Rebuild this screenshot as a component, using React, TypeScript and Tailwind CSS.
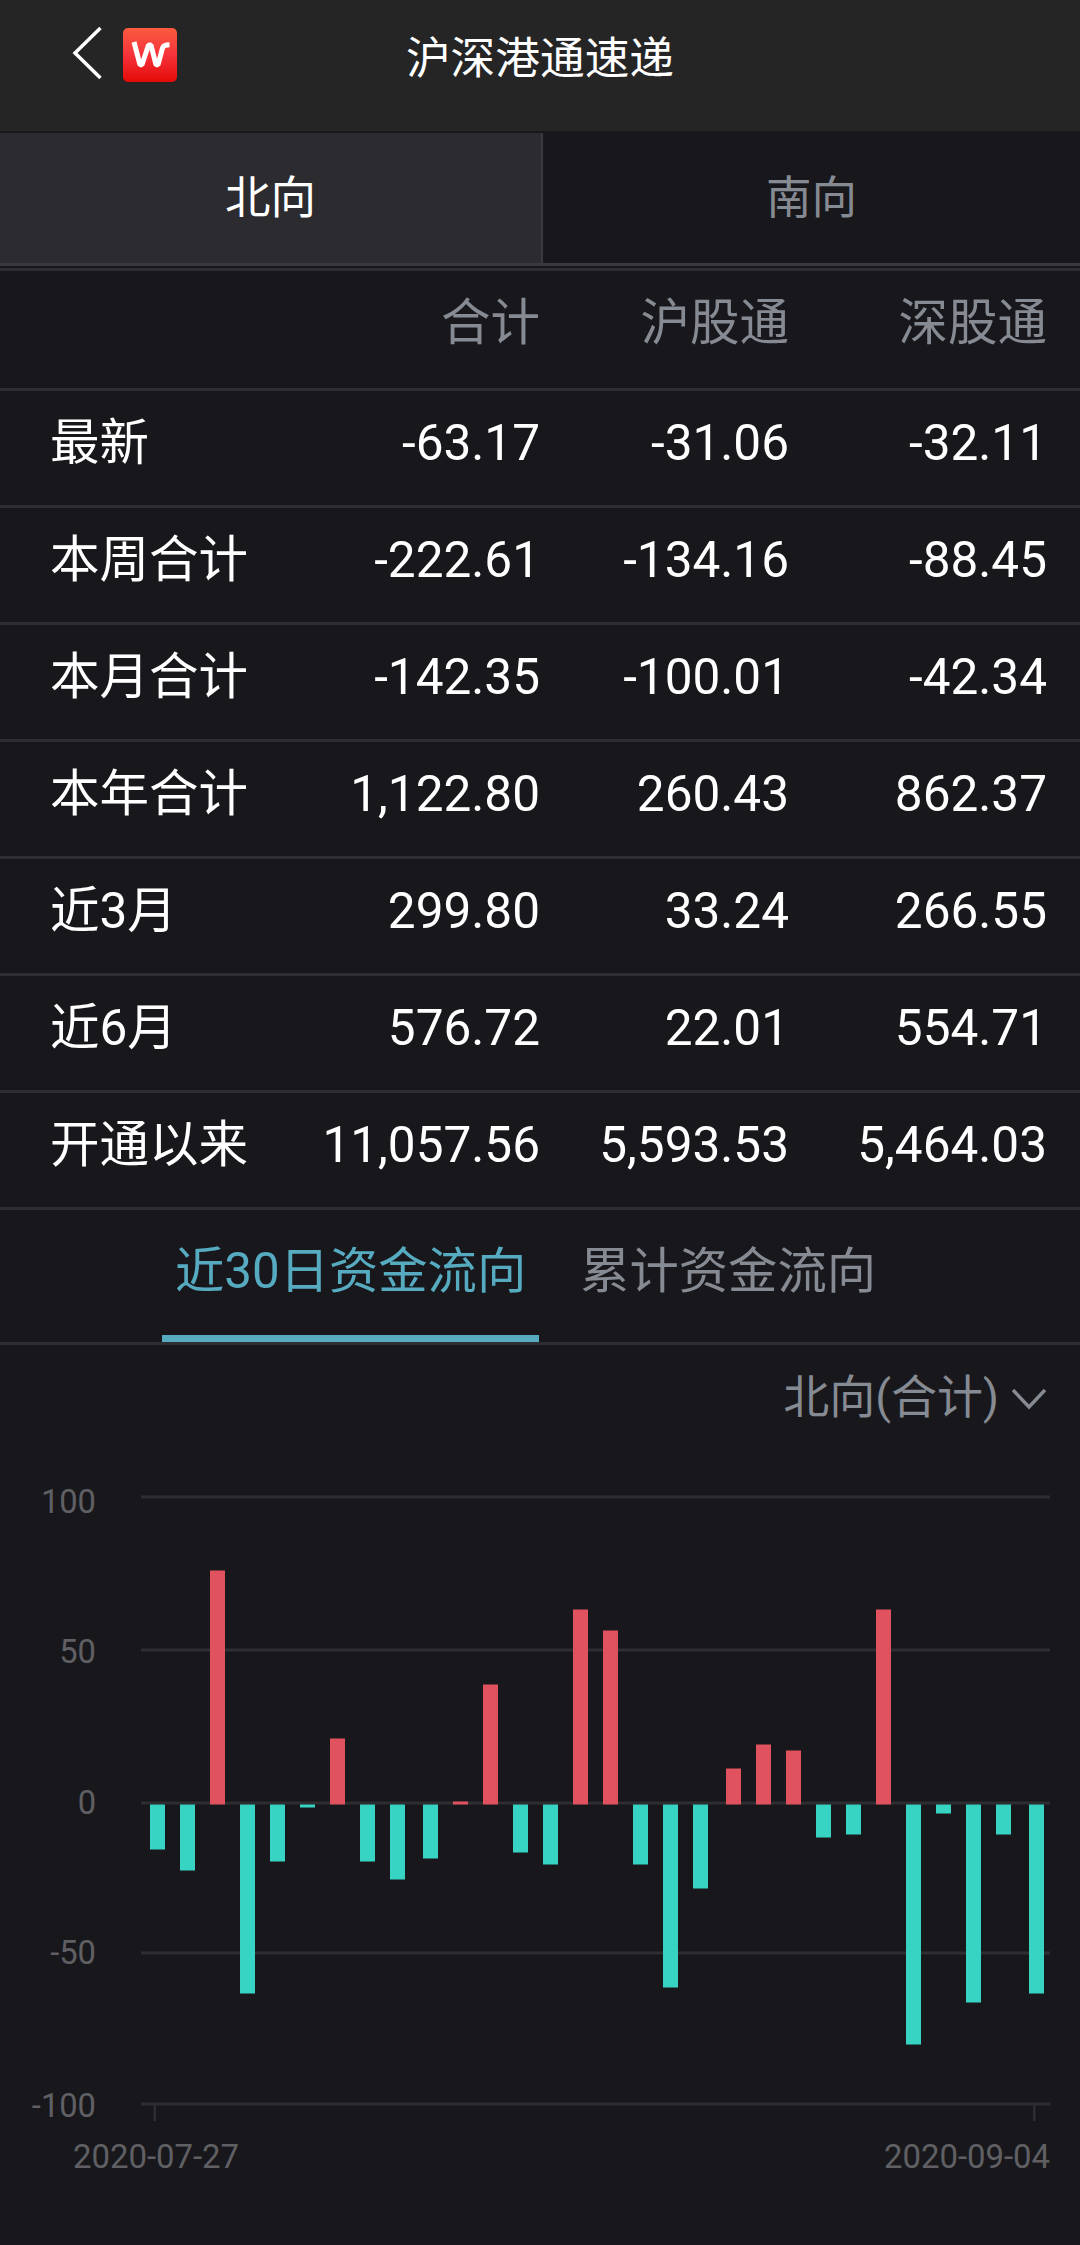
import { useState } from 'react';

const columns = ['合计', '沪股通', '深股通'];

const rows = [
    { label: '最新', values: ['-63.17', '-31.06', '-32.11'] },
    { label: '本周合计', values: ['-222.61', '-134.16', '-88.45'] },
    { label: '本月合计', values: ['-142.35', '-100.01', '-42.34'] },
    { label: '本年合计', values: ['1,122.80', '260.43', '862.37'] },
    { label: '近3月', values: ['299.80', '33.24', '266.55'] },
    { label: '近6月', values: ['576.72', '22.01', '554.71'] },
    { label: '开通以来', values: ['11,057.56', '5,593.53', '5,464.03'] },
];

// x offset and signed height of each daily bar, in chart pixels
const bars = [
    [150, -45], [180, -66], [210, 234], [240, -189], [270, -57], [300, -3],
    [330, 66], [360, -57], [390, -75], [423, -54], [453, 3], [483, 120],
    [513, -48], [543, -60], [573, 195], [603, 174], [633, -60], [663, -183],
    [693, -84], [726, 36], [756, 60], [786, 54], [816, -33], [846, -30],
    [876, 195], [906, -240], [936, -9], [966, -198], [996, -30], [1029, -189],
];

const gridLines = [
    { label: '100', y: 71, textY: 88 },
    { label: '50', y: 224, textY: 238 },
    { label: '0', y: 377, textY: 389 },
    { label: '-50', y: 527, textY: 539 },
    { label: '-100', y: 678, textY: 692 },
];

const ZERO = 379.5;

function FlowChart() {
    return (
        <svg width="1080" height="820" viewBox="0 0 1080 820" className="block">
            {gridLines.map((line) => (
                <g key={line.label}>
                    <rect x="141" y={line.y - 0.5} width="909" height="3" fill="#2d2d32" />
                    <text x="96" y={line.textY} textAnchor="end" fontSize="32.7" fill="#606064">{line.label}</text>
                </g>
            ))}
            <rect x="153.5" y="680" width="2.5" height="16" fill="#2d2d32" />
            <rect x="1033" y="680" width="2.5" height="16" fill="#2d2d32" />
            {bars.map(([x, h]) => (
                <rect
                    key={x}
                    x={x}
                    y={h > 0 ? ZERO - h : ZERO}
                    width="15"
                    height={Math.abs(h)}
                    fill={h > 0 ? '#e0525e' : '#37d3c3'}
                />
            ))}
            <text x="73" y="743" fontSize="32.9" fill="#606064">2020-07-27</text>
            <text x="1050" y="743" textAnchor="end" fontSize="32.9" fill="#606064">2020-09-04</text>
        </svg>
    );
}

function Logo() {
    return (
        <svg width="54" height="54" viewBox="0 0 54 54" fill="none">
            <defs>
                <linearGradient id="logo" x1="0" y1="0" x2="0" y2="1">
                    <stop offset="0" stopColor="#fb5a40" />
                    <stop offset="0.5" stopColor="#f5333a" />
                    <stop offset="1" stopColor="#e40a08" />
                </linearGradient>
            </defs>
            <rect width="54" height="54" rx="5" fill="url(#logo)" />
            <path d="M11 14L17 36.8H19L25.5 17H28L33 36.8H35L39.5 20Q40.5 16.7 46.5 16.7" stroke="#fff" strokeWidth="5" strokeLinejoin="bevel" />
        </svg>
    );
}

export default function App() {
    const [direction, setDirection] = useState('北向');
    const [flow, setFlow] = useState('近30日资金流向');

    return (
        <div className="w-[1080px] h-[2245px] overflow-hidden bg-[#18181c] text-white font-[Roboto,'Noto_Sans_CJK_SC',sans-serif]">
            <header className="grid grid-cols-[1fr_auto_1fr] h-[131px] pb-[21px] items-center bg-[#252525]">
                <div className="flex items-center pl-[72px]">
                    <svg width="30" height="54" viewBox="0 0 30 54" fill="none" className="-mt-1">
                        <path d="M28.5 2L3 27L28.5 52" stroke="#fff" strokeWidth="3.5" />
                    </svg>
                    <div className="ml-[21px]">
                        <Logo />
                    </div>
                </div>
                <h1 className="pt-[7px] text-[44.7px] leading-[60px]">沪深港通速递</h1>
            </header>

            <div className="flex h-[133px] mt-[2px] border-b-3 border-[#39393e]">
                {['北向', '南向'].map((name) => (
                    <button
                        key={name}
                        onClick={() => setDirection(name)}
                        className={`pt-[3px] text-[45.5px] ${name === '北向' ? 'w-[543px]' : 'w-[537px]'} ${direction === name ? 'bg-[#2c2b30] text-white border-r-2 border-[#39393e]' : 'text-[#868a92]'}`}
                    >
                        {name}
                    </button>
                ))}
            </div>

            <div className="mt-[2px] border-t-3 border-[#2d2d32] text-[49.5px]">
                <div className="grid grid-cols-[280px_260px_249px_258px] h-[120px] pb-[12px] items-center border-b-3 border-[#2d2d32] text-[#868a92] text-right">
                    <span />
                    {columns.map((name) => (
                        <span key={name}>{name}</span>
                    ))}
                </div>
                {rows.map((row) => (
                    <div
                        key={row.label}
                        className="grid grid-cols-[280px_260px_249px_258px] h-[117px] pb-[10px] items-center border-b-3 border-[#2d2d32] text-right"
                    >
                        <span className="pl-[50px] text-left whitespace-nowrap">{row.label}</span>
                        {row.values.map((value) => (
                            <span key={value}>{value}</span>
                        ))}
                    </div>
                ))}
            </div>

            <div className="flex gap-7 h-[135px] pl-[162px] border-b-3 border-[#2d2d32] text-[49.3px]">
                {['近30日资金流向', '累计资金流向'].map((name) => (
                    <button
                        key={name}
                        onClick={() => setFlow(name)}
                        className={`px-[13px] pb-[2px] border-b-7 whitespace-nowrap ${flow === name ? 'text-[#56abc1] border-[#56abc1]' : 'text-[#868a92] border-transparent'}`}
                    >
                        {name}
                    </button>
                ))}
            </div>

            <div className="flex h-[56px] mt-6 pr-[34px] items-center justify-end gap-[13px] text-[46px] leading-[56px] text-[#868a92]">
                <span>北向(合计)</span>
                <svg width="34" height="22" viewBox="0 0 34 22" fill="none" className="mt-1">
                    <path d="M1 2L17 19L33 2" stroke="currentColor" strokeWidth="3.5" />
                </svg>
            </div>

            <FlowChart />
        </div>
    );
}
